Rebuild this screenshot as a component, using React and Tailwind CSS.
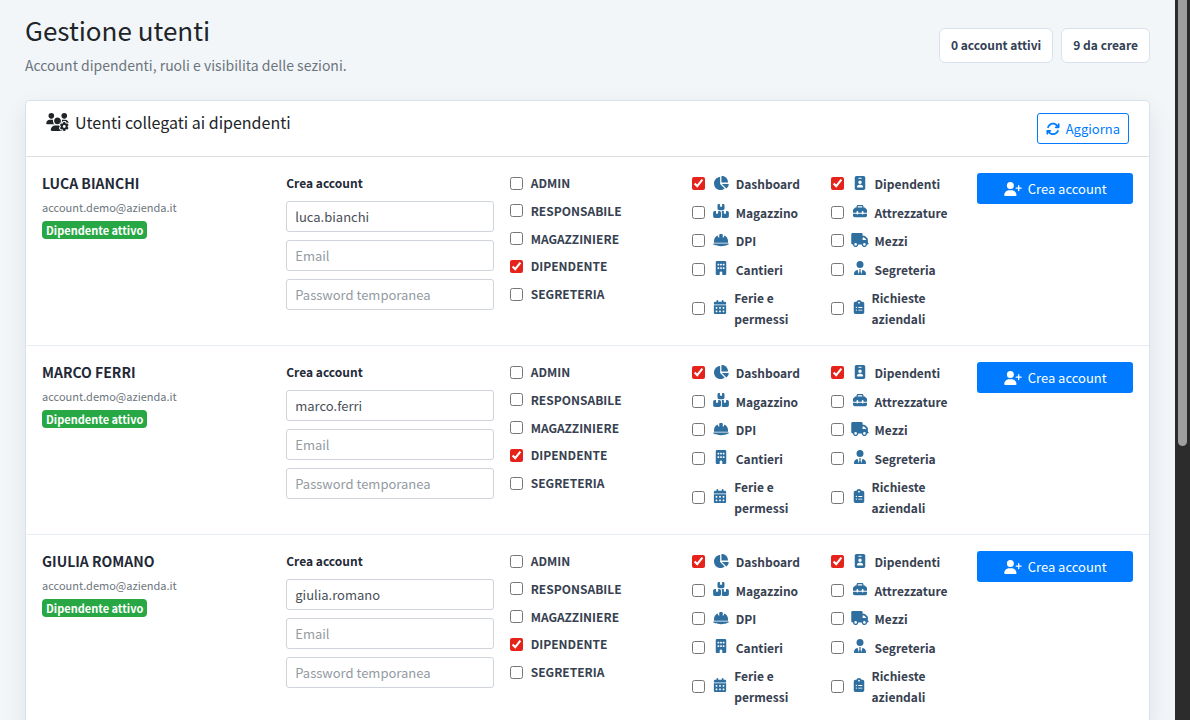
import { FaUsersGear, FaArrowsRotate, FaUserPlus, FaChartPie, FaBoxesStacked, FaHelmetSafety, FaBuilding, FaCalendarDays, FaIdBadge, FaToolbox, FaTruck, FaUserTie, FaClipboardList } from 'react-icons/fa6';

const users = [
    { name: 'LUCA BIANCHI', username: 'luca.bianchi' },
    { name: 'MARCO FERRI', username: 'marco.ferri' },
    { name: 'GIULIA ROMANO', username: 'giulia.romano' },
];

const roles = ['ADMIN', 'RESPONSABILE', 'MAGAZZINIERE', 'DIPENDENTE', 'SEGRETERIA'];

// Some glyphs are wider than they are tall
const sections = [
    { name: 'Dashboard', icon: FaChartPie, width: 'w-4', checked: true },
    { name: 'Dipendenti', icon: FaIdBadge, width: 'w-3.5', checked: true },
    { name: 'Magazzino', icon: FaBoxesStacked, width: 'w-4' },
    { name: 'Attrezzature', icon: FaToolbox, width: 'w-3.5' },
    { name: 'DPI', icon: FaHelmetSafety, width: 'w-4' },
    { name: 'Mezzi', icon: FaTruck, width: 'w-[18px]' },
    { name: 'Cantieri', icon: FaBuilding, width: 'w-3.5' },
    { name: 'Segreteria', icon: FaUserTie, width: 'w-3.5' },
    { name: 'Ferie e permessi', icon: FaCalendarDays, width: 'w-3.5' },
    { name: 'Richieste aziendali', icon: FaClipboardList, width: 'w-3.5' },
];

const inputClass = 'block w-full h-[31px] px-2 rounded-[3px] border border-[#ced4da] bg-white text-[13px] text-[#495057] placeholder:text-[#939ba2] outline-none focus:border-[#80bdff]';

const UserRow = ({ user }) => (
    <form
        onSubmit={(e) => e.preventDefault()}
        className="grid grid-cols-[1.1fr_1fr_0.8fr_1.3fr_0.75fr] gap-4 p-4 border-b border-[#e9eef4]"
    >
        <div>
            <h3 className="text-[14px] leading-5 font-bold text-[#1f2937]">{user.name}</h3>
            <p className="mt-1 text-[11px] leading-5 text-[#6c757d]">account.demo@azienda.it</p>
            <span className="mt-1 block w-fit px-1 rounded bg-[#28a745] text-[11px] leading-[18px] font-bold text-white">
                Dipendente attivo
            </span>
        </div>

        <fieldset>
            <legend className="text-[12px] leading-5 font-bold text-[#1f2937]">Crea account</legend>
            <div className="mt-2 space-y-2">
                <input className={inputClass} type="text" aria-label="Username" defaultValue={user.username} />
                <input className={inputClass} type="email" aria-label="Email" placeholder="Email" />
                <input className={inputClass} type="password" aria-label="Password temporanea" placeholder="Password temporanea" />
            </div>
        </fieldset>

        <div className="flex flex-col justify-between h-[131px]">
            {roles.map((role) => (
                <label key={role} className="flex items-center gap-2 text-[12px] leading-5 font-bold text-[#374151]">
                    <input type="checkbox" className="size-[13px] accent-[#e5231b]" defaultChecked={role === 'DIPENDENTE'} />
                    {role}
                </label>
            ))}
        </div>

        {/* Visible sections */}
        <div className="grid grid-cols-2 gap-x-2 content-between min-h-[156px]">
            {sections.map(({ name, icon: Icon, width, checked }) => (
                <label key={name} className="flex items-center gap-2 text-[12px] leading-[21px] font-bold text-[#374151]">
                    <input type="checkbox" className="size-[13px] shrink-0 accent-[#e5231b]" defaultChecked={checked} />
                    <span className="flex items-center gap-1.5">
                        <span className="flex justify-center w-[17px] pb-0.5">
                            <Icon className={`h-3.5 shrink-0 text-[#2f6f9f] ${width}`} />
                        </span>
                        {name}
                    </span>
                </label>
            ))}
        </div>

        <button
            type="submit"
            className="flex items-center justify-center gap-1.5 h-[31px] rounded-[3px] bg-[#007bff] text-[13px] leading-5 text-white hover:bg-[#0069d9]"
        >
            <FaUserPlus className="w-[18px] h-3.5" />
            Crea account
        </button>
    </form>
);

const App = () => {
    return (
        <div className="flex h-screen overflow-hidden bg-[#f2f6f9] font-['Noto_Sans_CJK_SC',sans-serif]">
            <main className="flex-1 min-w-0 px-[25px] overflow-hidden">
                <header className="flex justify-between pt-2.5">
                    <div>
                        <h1 className="text-[26px] leading-10 text-[#212529]">Gestione utenti</h1>
                        <p className="mt-0.5 text-[14px] leading-[26px] text-[#6c757d]">Account dipendenti, ruoli e visibilita delle sezioni.</p>
                    </div>
                    <div className="flex gap-2 mt-[18px] text-[12px] leading-4 font-bold text-[#334155]">
                        <span className="h-[35px] px-[11px] py-2 rounded-md border border-[#d9e2ec] bg-white">0 account attivi</span>
                        <span className="h-[35px] px-[11px] py-2 rounded-md border border-[#d9e2ec] bg-white">9 da creare</span>
                    </div>
                </header>

                <section className="mt-[22px] rounded border border-[#d9e2ec] bg-white shadow-[0_8px_24px_rgba(15,23,42,0.08)]">
                    <div className="flex justify-between py-3 px-5 border-b border-[#dfdfdf]">
                        <h2 className="flex items-center gap-1.5 h-[18px] text-[16px] text-[#212529]">
                            <FaUsersGear className="w-[23px] h-[18px]" />
                            Utenti collegati ai dipendenti
                        </h2>
                        <button
                            type="button"
                            className="flex items-center gap-1.5 h-[31px] px-2 rounded-[3px] border border-[#007bff] text-[13px] text-[#007bff] hover:bg-[#007bff] hover:text-white"
                        >
                            <FaArrowsRotate className="size-3.5" />
                            Aggiorna
                        </button>
                    </div>
                    {users.map((user) => (
                        <UserRow key={user.username} user={user} />
                    ))}
                </section>
            </main>

            {/* Scroll track */}
            <div className="w-[15px] shrink-0 bg-[#2c2c2c]">
                <div className="mx-[3px] h-[62%] rounded-b-full bg-[#9f9f9f]"></div>
            </div>
        </div>
    );
};

export default App;
